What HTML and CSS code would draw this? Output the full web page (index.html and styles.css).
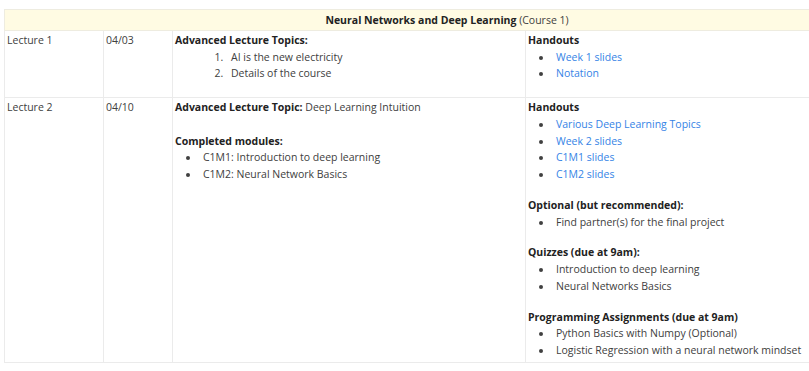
FILE: index.html
```html
<!DOCTYPE html>
<html lang="en">
<head>
<meta charset="utf-8">
<title>Neural Networks and Deep Learning</title>
<link rel="stylesheet" href="styles.css">
</head>
<body>
<table class="schedule">
  <colgroup>
    <col class="c-lecture">
    <col class="c-date">
    <col class="c-topic">
    <col class="c-material">
  </colgroup>
  <thead>
    <tr>
      <th colspan="4" class="course"><b>Neural Networks and Deep Learning</b> (Course 1)</th>
    </tr>
  </thead>
  <tbody>
    <tr>
      <td>Lecture 1</td>
      <td>04/03</td>
      <td>
        <div class="head">Advanced Lecture Topics:</div>
        <ol class="topics">
          <li>AI is the new electricity</li>
          <li>Details of the course</li>
        </ol>
      </td>
      <td>
        <div class="head">Handouts</div>
        <ul class="list">
          <li><a href="#">Week 1 slides</a></li>
          <li><a href="#">Notation</a></li>
        </ul>
      </td>
    </tr>
    <tr>
      <td>Lecture 2</td>
      <td>04/10</td>
      <td>
        <p class="topic-line"><span class="head">Advanced Lecture Topic:</span> Deep Learning Intuition</p>
        <div class="head">Completed modules:</div>
        <ul class="list">
          <li>C1M1: Introduction to deep learning</li>
          <li>C1M2: Neural Network Basics</li>
        </ul>
      </td>
      <td>
        <div class="head">Handouts</div>
        <ul class="list">
          <li><a href="#">Various Deep Learning Topics</a></li>
          <li><a href="#">Week 2 slides</a></li>
          <li><a href="#">C1M1 slides</a></li>
          <li><a href="#">C1M2 slides</a></li>
        </ul>
        <div class="head">Optional (but recommended):</div>
        <ul class="list">
          <li>Find partner(s) for the final project</li>
        </ul>
        <div class="head">Quizzes (due at 9am):</div>
        <ul class="list">
          <li>Introduction to deep learning</li>
          <li>Neural Networks Basics</li>
        </ul>
        <div class="head">Programming Assignments (due at 9am)</div>
        <ul class="list last">
          <li>Python Basics with Numpy (Optional)</li>
          <li>Logistic Regression with a neural network mindset</li>
        </ul>
      </td>
    </tr>
  </tbody>
</table>
</body>
</html>
```
FILE: styles.css
```css
html {
  overflow: hidden;
  background: #ffffff;
}

body {
  margin: 9px 0 0 4px;
  font-family: "Open Sans", "Noto Sans", "Liberation Sans", sans-serif;
  font-size: 10.5px;
  line-height: 16.75px;
  color: #404040;
}

.schedule {
  border-collapse: collapse;
  width: 885px;
  table-layout: fixed;
}

.c-lecture { width: 99px; }
.c-date { width: 69px; }
.c-topic { width: 353px; }
.c-material { width: 364px; }

.schedule th,
.schedule td {
  border: 1px solid #ebebeb;
  padding: 1px 2px;
  vertical-align: top;
  text-align: left;
}

.schedule th.course {
  background: #fffbe3;
  border-color: #eeece0;
  text-align: center;
  font-weight: normal;
  padding: 1.5px 2px;
}

.course b {
  font-weight: 700;
  color: #222;
}

.head {
  font-weight: 700;
  color: #222;
}

.topic-line {
  margin: 0 0 16.75px;
}

.topic-line .head {
  display: inline;
}

.topics {
  margin: 0 0 14px;
  padding-left: 51px;
}

.topics li {
  padding-left: 5px;
}

.list {
  margin: 0 0 14px;
  padding-left: 25px;
}

.list li {
  list-style: disc;
  padding-left: 3px;
}

.list.last {
  margin-bottom: 2px;
}

a {
  color: #3583e6;
  text-decoration: none;
}
```
